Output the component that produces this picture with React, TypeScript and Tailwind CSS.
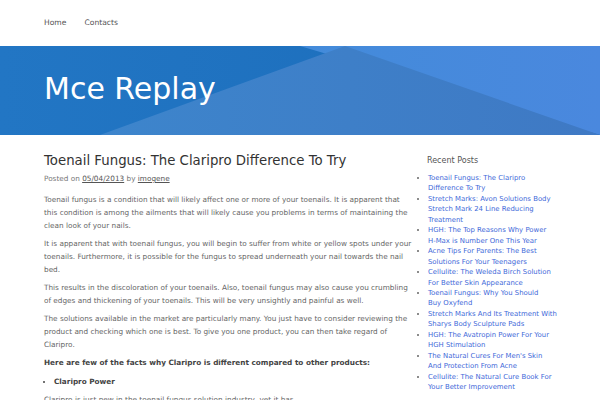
import React from "react";

const posts: string[][] = [
  ["Toenail Fungus: The Claripro", "Difference To Try"],
  ["Stretch Marks: Avon Solutions Body", "Stretch Mark 24 Line Reducing", "Treatment"],
  ["HGH: The Top Reasons Why Power", "H-Max is Number One This Year"],
  ["Acne Tips For Parents: The Best", "Solutions For Your Teenagers"],
  ["Cellulite: The Weleda Birch Solution", "For Better Skin Appearance"],
  ["Toenail Fungus: Why You Should", "Buy Oxyfend"],
  ["Stretch Marks And Its Treatment With", "Sharys Body Sculpture Pads"],
  ["HGH: The Avatropin Power For Your", "HGH Stimulation"],
  ["The Natural Cures For Men's Skin", "And Protection From Acne"],
  ["Cellulite: The Natural Cure Book For", "Your Better Improvement"],
];

export default function App() {
  return (
    <div className="w-[600px] h-[400px] overflow-hidden bg-white font-['DejaVu_Sans',sans-serif]">
      <nav className="h-[46px] flex items-center gap-[18px] pl-[44px] text-[7.6px] text-[#555]">
        <span>Home</span>
        <span>Contacts</span>
      </nav>
      <header className="relative h-[89px] bg-[#1d6fbd] overflow-hidden">
        <svg className="absolute inset-0" width="600" height="89" viewBox="0 0 600 89" preserveAspectRatio="none">
          <defs>
            <linearGradient id="g1" x1="0" y1="0" x2="1" y2="0">
              <stop offset="0" stopColor="#2276c4" />
              <stop offset="1" stopColor="#1b6cba" />
            </linearGradient>
            <linearGradient id="g2" x1="0" y1="0" x2="1" y2="0">
              <stop offset="0" stopColor="#438bda" />
              <stop offset="1" stopColor="#4a88de" />
            </linearGradient>
            <linearGradient id="g3" x1="0" y1="0" x2="1" y2="0">
              <stop offset="0" stopColor="#3d85cc" />
              <stop offset="1" stopColor="#3f79c4" />
            </linearGradient>
          </defs>
          <rect width="600" height="89" fill="url(#g1)" />
          <polygon points="300,0 600,0 600,89" fill="url(#g2)" />
          <polygon points="100,89 345,0 600,89" fill="url(#g3)" />
        </svg>
        <h1 className="relative pl-[44px] pt-[25px] text-[30px] leading-[36px] text-white">Mce Replay</h1>
      </header>
      <div className="flex pt-[17px]">
        <main className="w-[368px] ml-[44px] shrink-0 text-[7.3px] leading-[13px] text-[#666]">
          <h2 className="text-[13.3px] leading-[17px] text-[#333] mb-[3px]">Toenail Fungus: The Claripro Difference To Try</h2>
          <p className="text-[#777] mb-[8px]">
            Posted on <span className="underline text-[#555]">05/04/2013</span> by <span className="underline text-[#555]">imogene</span>
          </p>
          <p className="mb-[5px]">Toenail fungus is a condition that will likely affect one or more of your toenails. It is apparent that this condition is among the ailments that will likely cause you problems in terms of maintaining the clean look of your nails.</p>
          <p className="mb-[5px]">It is apparent that with toenail fungus, you will begin to suffer from white or yellow spots under your toenails. Furthermore, it is possible for the fungus to spread underneath your nail towards the nail bed.</p>
          <p className="mb-[5px]">This results in the discoloration of your toenails. Also, toenail fungus may also cause you crumbling of edges and thickening of your toenails. This will be very unsightly and painful as well.</p>
          <p className="mb-[5px]">The solutions available in the market are particularly many. You just have to consider reviewing the product and checking which one is best. To give you one product, you can then take regard of Claripro.</p>
          <p className="mb-[6px] font-bold text-[#444]">Here are few of the facts why Claripro is different compared to other products:</p>
          <ul className="list-disc pl-[10px] mb-[5px] font-bold text-[#444]">
            <li>Claripro Power</li>
          </ul>
          <p>Claripro is just new in the toenail fungus solution industry, yet it has</p>
        </main>
        <aside className="w-[150px] pl-[16px] pt-[3px]">
          <h3 className="text-[8px] leading-[12px] text-[#555] -ml-[1px] mb-[6px]">Recent Posts</h3>
          <ul className="list-disc text-[6.9px] leading-[10.45px] text-[#4169d9] marker:text-[#666] whitespace-nowrap">
            {posts.map((lines) => (
              <li key={lines[0]}>
                {lines.map((l, i) => (
                  <React.Fragment key={l}>
                    {i > 0 && <br />}
                    {l}
                  </React.Fragment>
                ))}
              </li>
            ))}
          </ul>
        </aside>
      </div>
    </div>
  );
}
